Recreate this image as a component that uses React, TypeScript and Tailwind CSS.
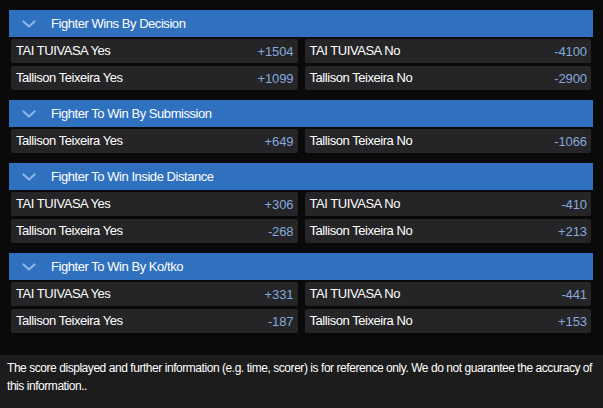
import React from "react";

type Sel = { name: string; odds: string };
type Market = { title: string; rows: [Sel, Sel][] };

const markets: Market[] = [
  {
    title: "Fighter Wins By Decision",
    rows: [
      [{ name: "TAI TUIVASA Yes", odds: "+1504" }, { name: "TAI TUIVASA No", odds: "-4100" }],
      [{ name: "Tallison Teixeira Yes", odds: "+1099" }, { name: "Tallison Teixeira No", odds: "-2900" }],
    ],
  },
  {
    title: "Fighter To Win By Submission",
    rows: [[{ name: "Tallison Teixeira Yes", odds: "+649" }, { name: "Tallison Teixeira No", odds: "-1066" }]],
  },
  {
    title: "Fighter To Win Inside Distance",
    rows: [
      [{ name: "TAI TUIVASA Yes", odds: "+306" }, { name: "TAI TUIVASA No", odds: "-410" }],
      [{ name: "Tallison Teixeira Yes", odds: "-268" }, { name: "Tallison Teixeira No", odds: "+213" }],
    ],
  },
  {
    title: "Fighter To Win By Ko/tko",
    rows: [
      [{ name: "TAI TUIVASA Yes", odds: "+331" }, { name: "TAI TUIVASA No", odds: "-441" }],
      [{ name: "Tallison Teixeira Yes", odds: "-187" }, { name: "Tallison Teixeira No", odds: "+153" }],
    ],
  },
];

function Chevron() {
  return (
    <svg width="14" height="8" viewBox="0 0 14 8" className="shrink-0">
      <path d="M1.5 1.5 L7 6.5 L12.5 1.5" fill="none" stroke="#8db6e6" strokeWidth="2.2" strokeLinecap="round" strokeLinejoin="round" />
    </svg>
  );
}

function Cell({ s }: { s: Sel }) {
  return (
    <div className="flex h-[24px] items-center justify-between rounded-[2px] bg-[#252527] pl-[5px] pr-[4px]">
      <span className="text-[13px] tracking-[-0.45px] text-white">{s.name}</span>
      <span className="pt-[2px] text-[13px] tracking-[-0.1px] text-[#86a9dc]">{s.odds}</span>
    </div>
  );
}

export default function App() {
  return (
    <div
      className="flex h-[408px] w-[603px] flex-col overflow-hidden bg-[#0a0a0a]"
      style={{ fontFamily: '"Liberation Sans", Arial, sans-serif' }}
    >
      <div className="flex flex-col gap-[10px] pl-[9px] pr-[10px] pt-[10px]">
        {markets.map((m) => (
          <div key={m.title} className="flex flex-col">
            <div className="flex h-[27px] items-center bg-[#2f70bf] pl-[13px]">
              <Chevron />
              <span className="ml-[15px] text-[13px] tracking-[-0.45px] text-white">{m.title}</span>
            </div>
            <div className="mt-[2px] flex flex-col gap-[3px] px-[2px]">
              {m.rows.map((r, i) => (
                <div key={i} className="grid grid-cols-2 gap-[7px]">
                  <Cell s={r[0]} />
                  <Cell s={r[1]} />
                </div>
              ))}
            </div>
          </div>
        ))}
      </div>
      <div className="mt-[22px] flex-1 bg-[#1c1c1c] pl-[7px] pr-[4px] pt-[4px] text-[12px] leading-[18px] tracking-[-0.45px] text-white">
        The score displayed and further information (e.g. time, scorer) is for reference only. We do not guarantee the accuracy of this information..
      </div>
    </div>
  );
}
